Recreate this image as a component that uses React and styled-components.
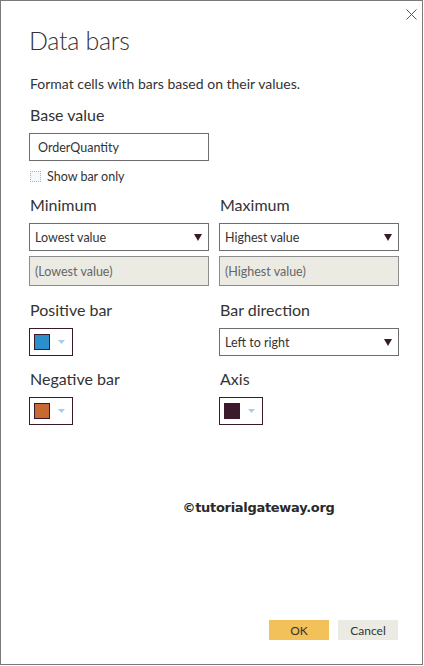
import React from "react";
import styled, { createGlobalStyle } from "styled-components";

const GlobalStyle = createGlobalStyle`
  html, body { margin: 0; padding: 0; background: #ffffff; }
  body { font-family: "Lato", "Open Sans", sans-serif; color: #333333; }
  * { box-sizing: border-box; }
`;

const Dialog = styled.div`
  position: relative;
  width: 423px;
  height: 665px;
  border: 1px solid #7a7a7a;
  background: #ffffff;
  padding: 0 24px 0 28px;
  display: flex;
  flex-direction: column;
`;

const CloseButton = styled.button`
  position: absolute;
  top: 7px;
  right: 5px;
  width: 12px;
  height: 12px;
  padding: 0;
  border: 0;
  background: transparent;
  display: flex;
  align-items: center;
  justify-content: center;
`;

const Title = styled.h1`
  margin: 24px 0 0 0;
  font-size: 25px;
  line-height: 30px;
  font-weight: 300;
  letter-spacing: -0.3px;
  color: #333;
`;

const Description = styled.p`
  margin: 20px 0 0 1px;
  font-size: 14px;
  line-height: 18px;
  color: #333;
`;

const Label = styled.div`
  margin-top: ${(p) => p.$top || 0}px;
  margin-left: 1px;
  font-size: 16px;
  line-height: 20px;
  color: #333;
`;

const TextInput = styled.div`
  margin-top: 8px;
  width: 180px;
  height: 28px;
  border: 1px solid #6e6e6e;
  padding: 0 8px;
  display: flex;
  align-items: center;
  font-size: 12.5px;
  color: #333;
`;

const CheckRow = styled.label`
  margin-top: 8px;
  display: flex;
  align-items: center;
  gap: 6px;
  font-size: 12.5px;
  color: #333;
  margin-left: 1px;
`;

const CheckBox = styled.span`
  width: 11px;
  height: 11px;
  border: 1px dotted #86bde6;
  background: #f4f9fd;
`;

const Grid = styled.div`
  margin-top: ${(p) => p.$top || 0}px;
  display: grid;
  grid-template-columns: 180px 180px;
  column-gap: 10px;
`;

const Column = styled.div`
  display: flex;
  flex-direction: column;
`;

const Select = styled.div`
  margin-top: ${(p) => p.$top || 8}px;
  width: 180px;
  height: 28px;
  border: 1px solid #6e6e6e;
  padding: 0 6px 0 5px;
  display: flex;
  align-items: center;
  justify-content: space-between;
  font-size: 12.5px;
  color: #333;
`;

const Arrow = styled.span`
  width: 0;
  height: 0;
  border-left: 4px solid transparent;
  border-right: 4px solid transparent;
  border-top: 7px solid #3a1a2a;
`;

const DisabledField = styled.div`
  margin-top: 5px;
  width: 180px;
  height: 30px;
  border: 1px solid #8c8c8c;
  background: #ebebe4;
  padding: 0 5px;
  display: flex;
  align-items: center;
  font-size: 12.5px;
  color: #666;
`;

const ColorButton = styled.div`
  margin-top: ${(p) => p.$top || 8}px;
  width: 44px;
  height: 28px;
  border: 1px solid #3a1a2a;
  padding: 0 0 0 4px;
  display: flex;
  align-items: center;
  gap: 8px;
`;

const Swatch = styled.span`
  width: 16px;
  height: 16px;
  border: 1px solid #3a1a2a;
  background: ${(p) => p.$color};
`;

const Watermark = styled.div`
  margin-top: 75px;
  text-align: center;
  padding-left: 90px;
  font-family: "DejaVu Sans", "Liberation Sans", sans-serif;
  font-weight: bold;
  font-size: 13px;
  color: #2a2a2a;
  letter-spacing: -0.3px;
`;

const Footer = styled.div`
  margin-top: auto;
  margin-bottom: 24px;
  display: flex;
  justify-content: flex-end;
  gap: 9px;
`;

const Button = styled.button`
  width: 60px;
  height: 20px;
  border: 0;
  padding: 0;
  font-family: "Lato", "Open Sans", sans-serif;
  font-size: 12px;
  color: #333;
  background: ${(p) => (p.$primary ? "#f2c15a" : "#ebebe4")};
`;

const ColorArrow = () => (
  <svg width="7" height="5" viewBox="0 0 7 5">
    <path d="M0 0 L7 0 L3.5 4 Z" fill="#a7cde9" />
  </svg>
);

const ColorPicker = ({ color, top }) => (
  <ColorButton $top={top}>
    <Swatch $color={color} />
    <ColorArrow />
  </ColorButton>
);

export default function App() {
  return (
    <>
      <GlobalStyle />
      <Dialog>
        <CloseButton aria-label="Close">
          <svg width="11" height="11" viewBox="0 0 11 11">
            <path d="M0.5 0.5 L10.5 10.5 M10.5 0.5 L0.5 10.5" stroke="#555" strokeWidth="1" />
          </svg>
        </CloseButton>
        <Title>Data bars</Title>
        <Description>Format cells with bars based on their values.</Description>
        <Label $top={12}>Base value</Label>
        <TextInput>OrderQuantity</TextInput>
        <CheckRow>
          <CheckBox />
          Show bar only
        </CheckRow>
        <Grid $top={11}>
          <Column>
            <Label>Minimum</Label>
            <Select>
              Lowest value
              <Arrow />
            </Select>
            <DisabledField>(Lowest value)</DisabledField>
          </Column>
          <Column>
            <Label>Maximum</Label>
            <Select>
              Highest value
              <Arrow />
            </Select>
            <DisabledField>(Highest value)</DisabledField>
          </Column>
        </Grid>
        <Grid $top={14}>
          <Column>
            <Label>Positive bar</Label>
            <ColorPicker color="#2a8fca" />
            <Label $top={13}>Negative bar</Label>
            <ColorPicker color="#c66a32" />
          </Column>
          <Column>
            <Label>Bar direction</Label>
            <Select $top={8}>
              Left to right
              <Arrow />
            </Select>
            <Label $top={13}>Axis</Label>
            <ColorPicker color="#3b1a2b" />
          </Column>
        </Grid>
        <Watermark>©tutorialgateway.org</Watermark>
        <Footer>
          <Button $primary>OK</Button>
          <Button>Cancel</Button>
        </Footer>
      </Dialog>
    </>
  );
}
